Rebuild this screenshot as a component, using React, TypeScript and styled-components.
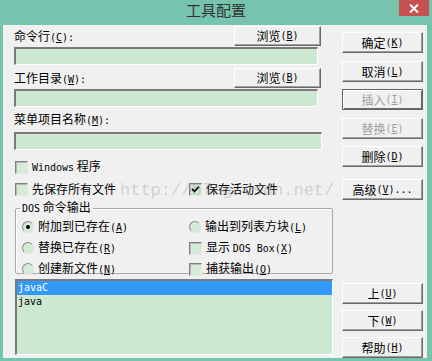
import React from "react";
import styled, { createGlobalStyle } from "styled-components";

const GlobalStyle = createGlobalStyle`
  html, body { margin: 0; padding: 0; background: #76c3ae; }
  body {
    font-family: "Noto Sans CJK SC", "Liberation Sans", sans-serif;
    font-size: 12px;
    color: #000;
  }
`;

const Window = styled.div`
  width: 432px;
  height: 361px;
  display: flex;
  flex-direction: column;
  background: #76c3ae;
  overflow: hidden;
`;

const TitleBar = styled.div`
  flex: none;
  height: 25px;
  display: grid;
  grid-template-columns: 1fr auto 1fr;
  align-items: start;
`;

const Title = styled.div`
  grid-column: 2;
  font-size: 15px;
  line-height: 20px;
  color: #333;
`;

const CloseButton = styled.div`
  grid-column: 3;
  justify-self: end;
  width: 30px;
  height: 16px;
  margin-right: 3px;
  background: #c75050;
  display: flex;
  align-items: center;
  justify-content: center;
`;

const Client = styled.div`
  flex: 1;
  position: relative;
  margin: 0 5px 3px 3px;
  background: #f0f0f0;
  display: grid;
  grid-template-columns: 319px 81px;
  column-gap: 9px;
  padding-left: 11px;
`;

const LeftColumn = styled.div`
  display: flex;
  flex-direction: column;
  align-items: flex-start;
`;

const RightColumn = styled.div`
  display: flex;
  flex-direction: column;
`;

const BottomButtons = styled.div`
  margin-top: auto;
  display: flex;
  flex-direction: column;
`;

const FieldRow = styled.div<{ $h: number; $mt?: number }>`
  width: 307px;
  height: ${(p) => p.$h}px;
  margin-top: ${(p) => p.$mt ?? 0}px;
  display: flex;
  justify-content: space-between;
  align-items: flex-end;
`;

const Label = styled.div<{ $mt?: number; $mb?: number }>`
  line-height: 14px;
  margin-top: ${(p) => p.$mt ?? 0}px;
  margin-bottom: ${(p) => p.$mb ?? 0}px;
  white-space: nowrap;
`;

const Mono = styled.span`
  font-family: "DejaVu Sans Mono", "Liberation Mono", monospace;
  font-size: 10px;
`;

const Under = styled.span`
  text-decoration: underline;
  text-underline-offset: 1px;
`;

const Key = ({ k, tail = "" }: { k: string; tail?: string }) => (
  <Mono>
    (<Under>{k}</Under>){tail}
  </Mono>
);

const Button = styled.div<{
  $w?: number;
  $h?: number;
  $mt?: number;
  $mb?: number;
  $disabled?: boolean;
  $focus?: boolean;
}>`
  flex: none;
  box-sizing: border-box;
  width: ${(p) => p.$w ?? 81}px;
  height: ${(p) => p.$h ?? 21}px;
  margin-top: ${(p) => p.$mt ?? 0}px;
  margin-bottom: ${(p) => p.$mb ?? 0}px;
  background: #f0f0f0;
  color: ${(p) => (p.$disabled ? "#a0a0a0" : "#000")};
  display: flex;
  align-items: center;
  justify-content: center;
  line-height: 14px;
  white-space: nowrap;
  border: 1px solid;
  border-color: ${(p) =>
    p.$focus ? "#646464" : "#ffffff #696969 #696969 #ffffff"};
  box-shadow: ${(p) =>
    p.$focus
      ? "inset 1px 1px 0 #ffffff, inset -1px -1px 0 #696969"
      : "inset -1px -1px 0 #a0a0a0"};
`;

const TextInput = styled.div<{ $w: number; $mt?: number }>`
  box-sizing: border-box;
  width: ${(p) => p.$w}px;
  height: 18px;
  margin-top: ${(p) => p.$mt ?? 0}px;
  background: #cde8d0;
  border-style: solid;
  border-width: 2px 1px 1px 2px;
  border-color: #7a7a7a #ffffff #ffffff #7a7a7a;
`;

const CheckRow = styled.div<{ $mt: number; $cols?: string }>`
  margin-top: ${(p) => p.$mt}px;
  margin-left: 1px;
  display: grid;
  grid-template-columns: ${(p) => p.$cols ?? "auto"};
  align-items: center;
`;

const Item = styled.div`
  display: flex;
  align-items: center;
  gap: 4px;
  line-height: 14px;
  white-space: nowrap;
`;

const CheckBox = styled.div`
  box-sizing: border-box;
  width: 13px;
  height: 13px;
  background: #d4ebd6;
  border: 1px solid;
  border-color: #808080 #e6e6e6 #e6e6e6 #808080;
  box-shadow: inset 1px 1px 0 #b8b8b8;
  display: flex;
  align-items: center;
  justify-content: center;
`;

const Radio = styled.div`
  box-sizing: border-box;
  width: 12px;
  height: 12px;
  border-radius: 50%;
  background: #d4ebd6;
  border: 1px solid;
  border-color: #8a8a8a #e0e0e0 #e0e0e0 #8a8a8a;
  display: flex;
  align-items: center;
  justify-content: center;
`;

const Dot = styled.div`
  width: 4px;
  height: 4px;
  border-radius: 50%;
  background: #000;
`;

const Group = styled.fieldset`
  box-sizing: border-box;
  margin: 4px 0 0 1px;
  width: 318px;
  height: 74px;
  padding: 0 0 0 6px;
  border: 1px solid #a9a9a9;
  border-radius: 2px;
  box-shadow: inset 1px 1px 0 #ffffff;
`;

const Legend = styled.legend`
  padding: 0 2px;
  margin-left: -2px;
  line-height: 14px;
`;

const GroupGrid = styled.div`
  margin-top: 3px;
  display: grid;
  grid-template-columns: 167px auto;
  row-gap: 5px;
`;

const ListBox = styled.div`
  box-sizing: border-box;
  margin: 5px 0 0 1px;
  width: 318px;
  height: 76px;
  background: #cde8d0;
  border-style: solid;
  border-width: 2px 1px 1px 2px;
  border-color: #7a7a7a #ffffff #ffffff #7a7a7a;
`;

const ListItem = styled.div<{ $selected?: boolean }>`
  height: 14px;
  line-height: 14px;
  padding-left: 1px;
  font-family: "DejaVu Sans Mono", "Liberation Mono", monospace;
  font-size: 10px;
  color: ${(p) => (p.$selected ? "#ffffff" : "#000")};
  background: ${(p) => (p.$selected ? "#3399ff" : "transparent")};
`;

const Watermark = styled.div`
  position: absolute;
  left: 117px;
  top: 156px;
  font-family: "Liberation Mono", monospace;
  font-size: 17px;
  line-height: 20px;
  color: rgba(140, 140, 140, 0.32);
  pointer-events: none;
  white-space: nowrap;
`;

const Check = () => (
  <svg width="9" height="9" viewBox="0 0 9 9">
    <path d="M1 4 L3.5 6.5 L8 1.5" fill="none" stroke="#000" strokeWidth="1.8" />
  </svg>
);

export default function App() {
  return (
    <>
      <GlobalStyle />
      <Window>
        <TitleBar>
          <Title>工具配置</Title>
          <CloseButton>
            <svg width="10" height="9" viewBox="0 0 10 9">
              <path d="M1 0.5 L9 8.5 M9 0.5 L1 8.5" stroke="#fff" strokeWidth="2" />
            </svg>
          </CloseButton>
        </TitleBar>
        <Client>
          <LeftColumn>
            <FieldRow $h={21} $mt={1}>
              <Label $mb={2}>
                命令行<Key k="C" tail=":" />
              </Label>
              <Button $w={87} $h={20} $mb={1}>
                浏览<Key k="B" />
              </Button>
            </FieldRow>
            <TextInput $w={304} />
            <FieldRow $h={24}>
              <Label $mb={2}>
                工作目录<Key k="W" tail=":" />
              </Label>
              <Button $w={87} $h={20} $mb={1}>
                浏览<Key k="B" />
              </Button>
            </FieldRow>
            <TextInput $w={304} />
            <Label $mt={5}>
              菜单项目名称<Key k="M" tail=":" />
            </Label>
            <TextInput $w={308} $mt={4} />
            <CheckRow $mt={9}>
              <Item>
                <CheckBox />
                <span>
                  <Mono>Windows</Mono> 程序
                </span>
              </Item>
            </CheckRow>
            <CheckRow $mt={7} $cols="174px auto">
              <Item>
                <CheckBox />
                <span>先保存所有文件</span>
              </Item>
              <Item>
                <CheckBox>
                  <Check />
                </CheckBox>
                <span>保存活动文件</span>
              </Item>
            </CheckRow>
            <Group>
              <Legend>
                <Mono>DOS</Mono> 命令输出
              </Legend>
              <GroupGrid>
                <Item>
                  <Radio>
                    <Dot />
                  </Radio>
                  <span>
                    附加到已存在<Key k="A" />
                  </span>
                </Item>
                <Item>
                  <Radio />
                  <span>
                    输出到列表方块<Key k="L" />
                  </span>
                </Item>
                <Item>
                  <Radio />
                  <span>
                    替换已存在<Key k="R" />
                  </span>
                </Item>
                <Item>
                  <CheckBox />
                  <span>
                    显示 <Mono>DOS Box</Mono>
                    <Key k="X" />
                  </span>
                </Item>
                <Item>
                  <Radio />
                  <span>
                    创建新文件<Key k="N" />
                  </span>
                </Item>
                <Item>
                  <CheckBox />
                  <span>
                    捕获输出<Key k="O" />
                  </span>
                </Item>
              </GroupGrid>
            </Group>
            <ListBox>
              <ListItem $selected>javaC</ListItem>
              <ListItem>java</ListItem>
            </ListBox>
          </LeftColumn>
          <RightColumn>
            <Button $mt={7}>
              确定<Key k="K" />
            </Button>
            <Button $mt={8}>
              取消<Key k="L" />
            </Button>
            <Button $mt={7} $disabled $focus>
              插入<Key k="I" />
            </Button>
            <Button $mt={8} $disabled>
              替换<Key k="E" />
            </Button>
            <Button $mt={7}>
              删除<Key k="D" />
            </Button>
            <Button $mt={12}>
              高级<Key k="V" tail="..." />
            </Button>
            <BottomButtons>
              <Button>
                上<Key k="U" />
              </Button>
              <Button $mt={6}>
                下<Key k="W" />
              </Button>
              <Button $mt={6}>
                帮助<Key k="H" />
              </Button>
            </BottomButtons>
          </RightColumn>
          <Watermark>http://blog.csdn.net/</Watermark>
        </Client>
      </Window>
    </>
  );
}
